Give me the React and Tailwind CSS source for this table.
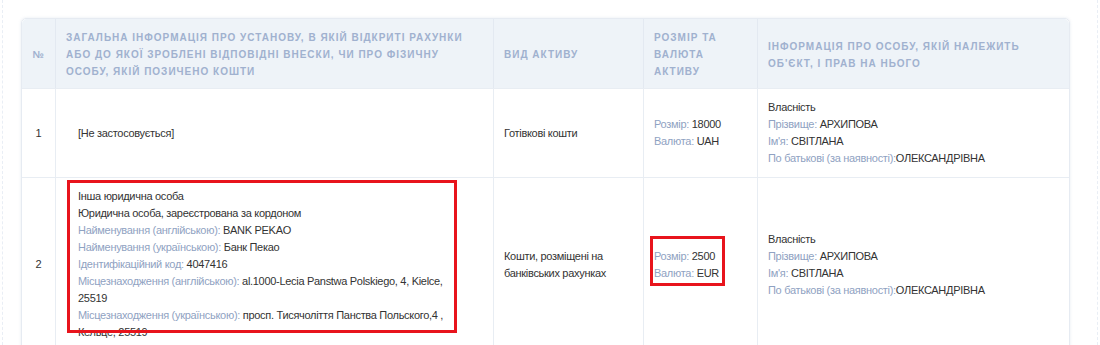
const label = "text-[#8fa2c2]";

function Field({ name, value, glue = " " }) {
  return (
    <div>
      <span className={label}>{name}:</span>
      {glue}
      <span>{value}</span>
    </div>
  );
}

function Owner() {
  return (
    <div>
      <div>Власність</div>
      <Field name="Прізвище" value="АРХИПОВА" />
      <Field name="Ім'я" value="СВІТЛАНА" />
      <Field name="По батькові (за наявності)" value="ОЛЕКСАНДРІВНА" glue="" />
    </div>
  );
}

function Amount({ size, currency, marked }) {
  return (
    <div className="relative w-fit">
      <Field name="Розмір" value={size} />
      <Field name="Валюта" value={currency} />
      {marked && (
        <div className="absolute -left-[4px] -right-[6px] -top-[12px] -bottom-[4px] border-[3px] border-[#e8141c]" />
      )}
    </div>
  );
}

export default function App() {
  const th = "px-[10px] pt-[10px] pb-[8px] text-left align-middle font-bold uppercase tracking-[1px] text-[10px] leading-[17px] text-[#a0b1cf] border-r border-[#e3e9f1] last:border-r-0";
  const td = "px-[10px] py-[10px] align-middle border-r border-t border-[#e8edf3] last:border-r-0";

  return (
    <div className="h-[345px] overflow-hidden bg-white px-[2px] font-['Liberation_Sans',Arial,sans-serif]">
      <div className="h-full border-x border-dashed border-[#e9eef5] pl-[18px] pt-[18px]">
        <table className="table-fixed border-separate border-spacing-0 w-[1047px] rounded-t-[5px] border border-[#e6ebf2] shadow-[0_0_3px_rgba(180,195,215,0.35)] text-[11px] leading-[17px] tracking-[-0.3px] text-[#333]">
          <colgroup>
            <col className="w-[34px]" />
            <col className="w-[438px]" />
            <col className="w-[150px]" />
            <col className="w-[114px]" />
            <col className="w-[311px]" />
          </colgroup>
          <thead className="bg-[#eef3f8]">
            <tr>
              <th className={th + " !text-center !px-0 rounded-tl-[5px]"}>№</th>
              <th className={th}>
                Загальна інформація про установу, в якій відкриті рахунки або до якої зроблені відповідні внески, чи про фізичну особу, якій позичено кошти
              </th>
              <th className={th}>Вид активу</th>
              <th className={th}>Розмір та валюта активу</th>
              <th className={th + " rounded-tr-[5px]"}>Інформація про особу, якій належить об'єкт, і прав на нього</th>
            </tr>
          </thead>
          <tbody>
            <tr>
              <td className={td + " !px-0 text-center"}>1</td>
              <td className={td}>
                <div className="pl-[12px]">[Не застосовується]</div>
              </td>
              <td className={td}>Готівкові кошти</td>
              <td className={td}>
                <Amount size="18000" currency="UAH" />
              </td>
              <td className={td}>
                <Owner />
              </td>
            </tr>
            <tr>
              <td className={td + " !px-0 text-center"}>2</td>
              <td className={td}>
                <div className="relative pl-[12px] w-[397px]">
                  <div>Інша юридична особа</div>
                  <div>Юридична особа, зареєстрована за кордоном</div>
                  <Field name="Найменування (англійською)" value="BANK PEKAO" />
                  <Field name="Найменування (українською)" value="Банк Пекао" />
                  <Field name="Ідентифікаційний код" value="4047416" />
                  <Field name="Місцезнаходження (англійською)" value="al.1000-Lecia Panstwa Polskiego, 4, Kielce, 25519" />
                  <Field name="Місцезнаходження (українською)" value="просп. Тисячоліття Панства Польского,4 , Кельце, 25519" />
                  <div className="absolute left-[1px] -top-[8px] w-[390px] h-[153px] border-[3px] border-[#e8141c]" />
                </div>
              </td>
              <td className={td}>Кошти, розміщені на банківських рахунках</td>
              <td className={td}>
                <Amount size="2500" currency="EUR" marked />
              </td>
              <td className={td}>
                <Owner />
              </td>
            </tr>
          </tbody>
        </table>
      </div>
    </div>
  );
}
